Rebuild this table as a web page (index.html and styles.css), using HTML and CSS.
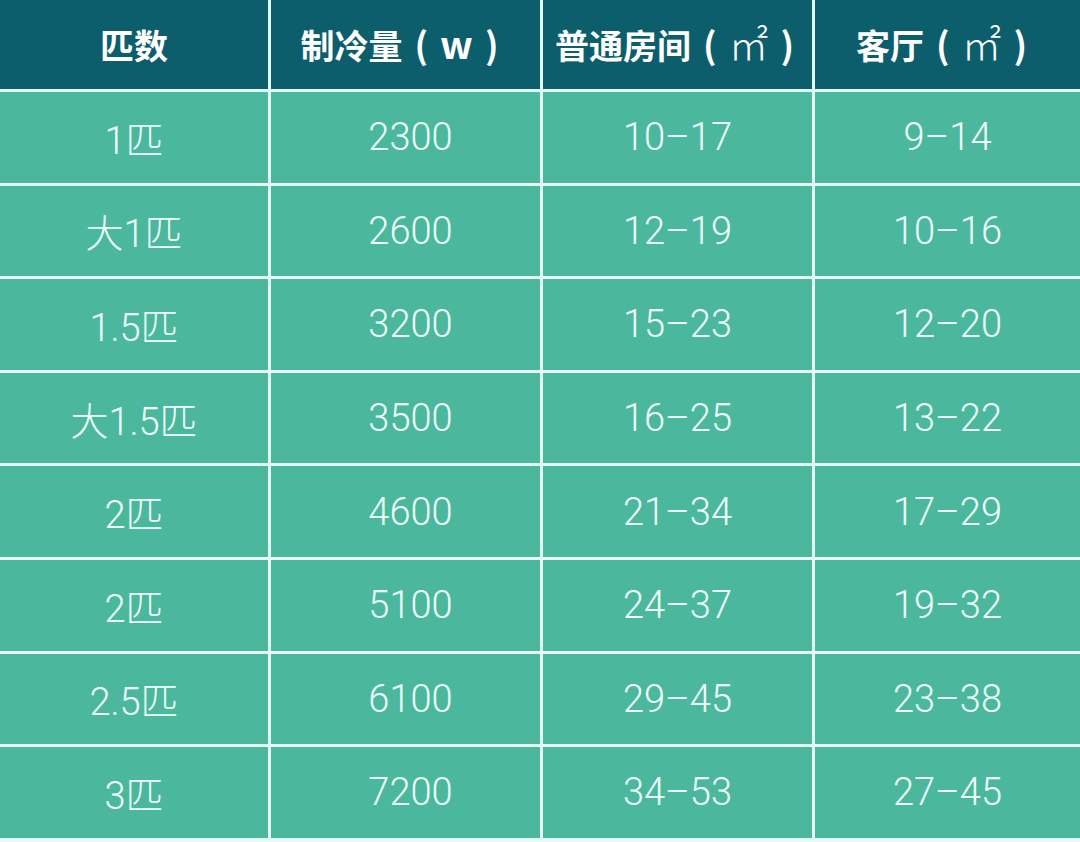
FILE: index.html
```html
<!DOCTYPE html>
<html lang="zh">
<head>
<meta charset="utf-8">
<title>空调匹数对照表</title>
<link rel="stylesheet" href="styles.css">
</head>
<body>
<div class="table">
  <div class="th">匹数</div>
  <div class="th">制冷量<span class="paren">(</span><span class="w">w</span><span class="paren">)</span></div>
  <div class="th">普通房间<span class="paren">(</span><span class="unit">㎡</span><span class="paren">)</span></div>
  <div class="th">客厅<span class="paren">(</span><span class="unit">㎡</span><span class="paren">)</span></div>

  <div class="td">1匹</div><div class="td">2300</div><div class="td">10–17</div><div class="td">9–14</div>
  <div class="td">大1匹</div><div class="td">2600</div><div class="td">12–19</div><div class="td">10–16</div>
  <div class="td">1.5匹</div><div class="td">3200</div><div class="td">15–23</div><div class="td">12–20</div>
  <div class="td">大1.5匹</div><div class="td">3500</div><div class="td">16–25</div><div class="td">13–22</div>
  <div class="td">2匹</div><div class="td">4600</div><div class="td">21–34</div><div class="td">17–29</div>
  <div class="td">2匹</div><div class="td">5100</div><div class="td">24–37</div><div class="td">19–32</div>
  <div class="td">2.5匹</div><div class="td">6100</div><div class="td">29–45</div><div class="td">23–38</div>
  <div class="td">3匹</div><div class="td">7200</div><div class="td">34–53</div><div class="td">27–45</div>
</div>
</body>
</html>
```
FILE: styles.css
```css
html, body {
  margin: 0;
  padding: 0;
  background: #e4faf4;
}
body {
  width: 1080px;
  height: 842px;
  overflow: hidden;
}
.table {
  display: grid;
  grid-template-columns: 268px 269px 269px 1fr;
  grid-template-rows: 89px repeat(8, 90.6px);
  gap: 3px;
  background: #e4faf4;
}
.th {
  background: #0d5e6d;
  color: #ffffff;
  font-family: "Noto Sans CJK SC", "Noto Sans", sans-serif;
  font-weight: 700;
  font-size: 34px;
  display: flex;
  align-items: center;
  justify-content: center;
}
.th:nth-child(3) {
  padding-left: 6px;
}
.paren {
  font-family: "Noto Sans CJK SC", sans-serif;
  font-weight: 700;
  font-size: 36px;
  margin: 0 12px;
  position: relative;
  top: -2px;
}
.w {
  font-family: "Noto Sans CJK SC", sans-serif;
  font-weight: 700;
  font-size: 38px;
  position: relative;
  top: -2px;
}
.unit {
  font-family: "Noto Sans CJK SC", sans-serif;
  font-weight: 300;
  font-size: 40px;
  position: relative;
  top: -2px;
}
.td {
  background: #4bb89d;
  color: #effffa;
  font-family: "Roboto", "Noto Sans CJK SC", sans-serif;
  font-weight: 300;
  font-size: 38px;
  display: flex;
  align-items: center;
  justify-content: center;
}
.td:nth-child(4n+2) {
  padding-left: 10px;
}
```
